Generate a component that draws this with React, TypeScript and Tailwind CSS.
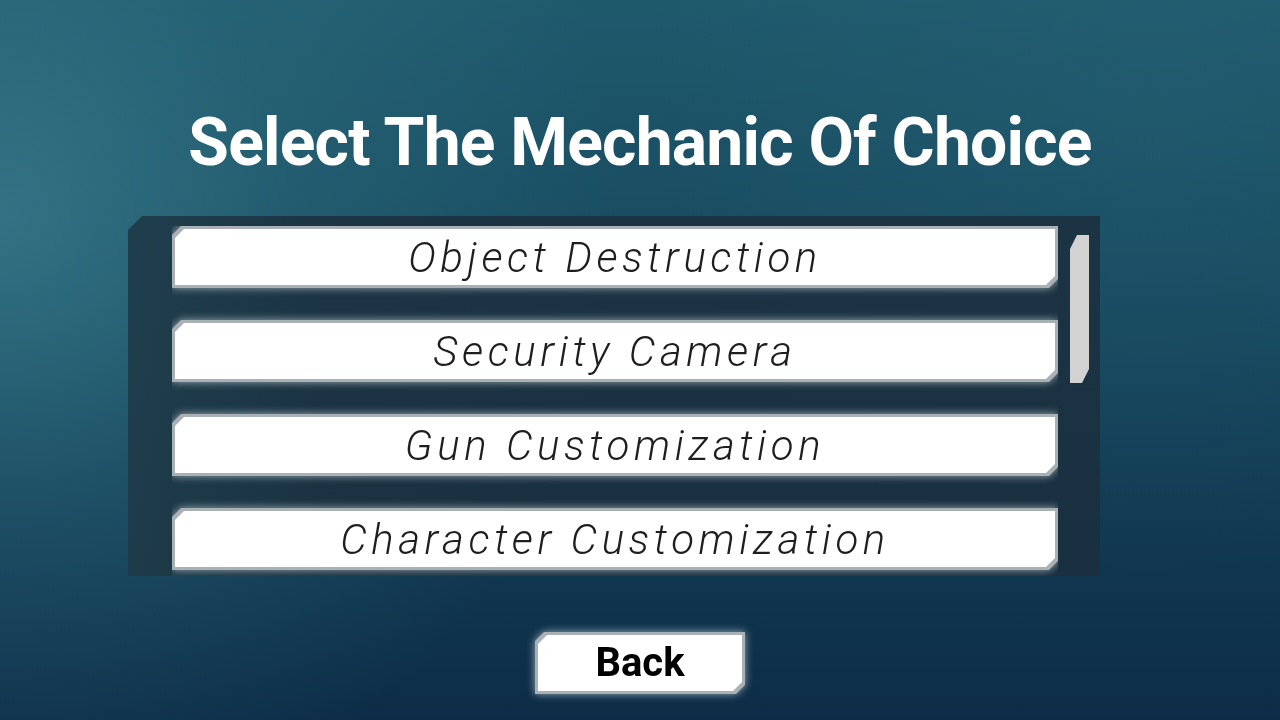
const options = [
  'Object Destruction',
  'Security Camera',
  'Gun Customization',
  'Character Customization',
];

// beveled shape: top-left and bottom-right corners cut
const bevel = '[clip-path:polygon(9px_0,100%_0,100%_calc(100%-9px),calc(100%-9px)_100%,0_100%,0_9px)]';

function MenuButton({ label }: { label: string }) {
  return (
    <div className="[filter:drop-shadow(0_0_4px_rgba(200,210,215,0.75))]">
      <div className={`${bevel} bg-[#a9b1b5] p-[3px]`}>
        <div
          className={`${bevel} flex h-[56px] items-center justify-center bg-white text-[42px] font-light italic tracking-[4.6px] text-[#1e1e1e]`}
          style={{ fontFamily: 'Roboto, "Liberation Sans", sans-serif' }}
        >
          {label}
        </div>
      </div>
    </div>
  );
}

export default function App() {
  return (
    <div className="relative h-[720px] w-[1280px] overflow-hidden bg-[#0f3550]">
      {/* background glow */}
      <div className="absolute inset-0 bg-[radial-gradient(circle_at_0%_30%,rgba(62,130,146,0.7)_0%,rgba(50,115,132,0.35)_300px,transparent_620px),radial-gradient(circle_at_90%_10%,rgba(40,100,120,0.35)_0%,transparent_500px),linear-gradient(180deg,#1f596c_0%,#17495f_40%,#0d2c47_100%)]" />

      <div className="relative flex flex-col items-center" style={{ fontFamily: 'Roboto, "Liberation Sans", sans-serif' }}>
        <h1 className="mt-[103px] text-[66px] font-bold leading-[80px] tracking-[-0.8px] text-white">
          Select The Mechanic Of Choice
        </h1>

        {/* scroll panel */}
        <div className="mt-[33px] ml-[-52px] flex h-[360px] w-[972px] bg-[linear-gradient(90deg,rgba(30,58,72,0.9),rgba(27,47,62,0.88)_20%,rgba(27,47,62,0.88))] pt-[10px] pl-[44px] pr-[10px] [clip-path:polygon(14px_0,100%_0,100%_100%,0_100%,0_14px)]">
          <div className="flex w-[886px] flex-col gap-[32px] overflow-hidden">
            {options.map((o) => (
              <MenuButton key={o} label={o} />
            ))}
          </div>
          <div className="ml-[12px] flex w-[20px] flex-col pt-[9px]">
            <div className="h-[148px] w-[19px] bg-[#d2d2d2] [clip-path:polygon(0_14px,7px_0,100%_0,100%_calc(100%-14px),calc(100%-7px)_100%,0_100%)]" />
          </div>
        </div>

        {/* back button */}
        <div className="mt-[56px] [filter:drop-shadow(0_0_4px_rgba(200,210,215,0.75))]">
          <div className={`${bevel} bg-[#a9b1b5] p-[3px]`}>
            <div className={`${bevel} flex h-[56px] w-[204px] items-center justify-center bg-white text-[40px] font-bold text-black`}>
              Back
            </div>
          </div>
        </div>
      </div>
    </div>
  );
}
